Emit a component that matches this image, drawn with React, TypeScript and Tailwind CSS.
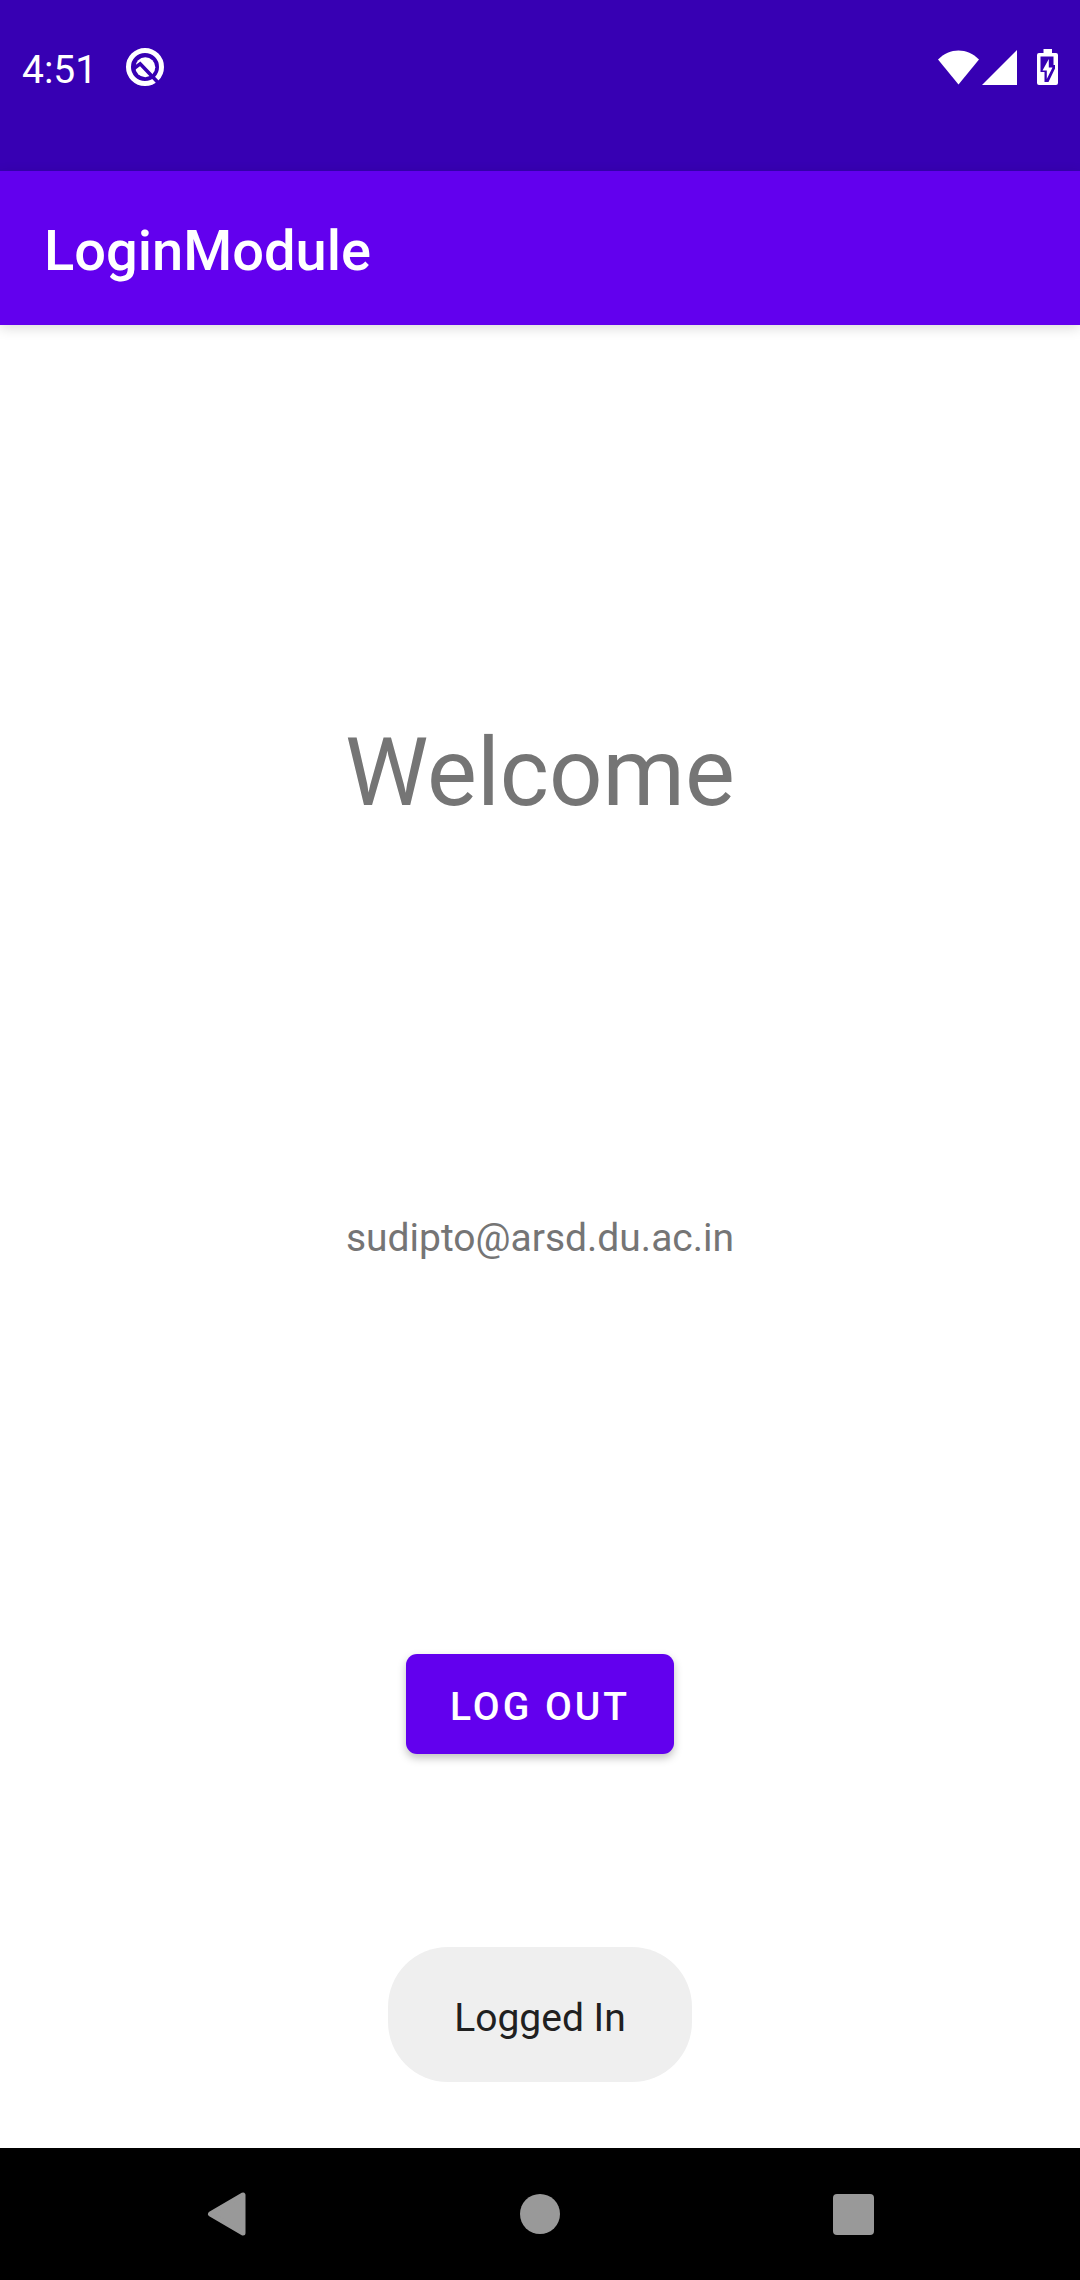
function AssistantIcon() {
  return (
    <svg className="h-10 w-10" viewBox="0 0 40 40" fill="none" aria-hidden="true">
      <circle cx="20" cy="20" r="16.5" stroke="white" strokeWidth="5" />
      <circle cx="20.3" cy="20.3" r="10" fill="white" />
      <path d="M7.5 22.5 15.2 16.8 33 35.5" stroke="#3700b3" strokeWidth="3.6" />
    </svg>
  );
}

function WifiIcon() {
  return (
    <svg className="h-[35px] w-[41px]" viewBox="0 0 41 35" fill="white" aria-hidden="true">
      <path d="M20.5 34.5 0 9.5C6 3.5 13 .5 20.5 .5S35 3.5 41 9.5Z" />
    </svg>
  );
}

function SignalIcon() {
  return (
    <svg className="h-[35px] w-[35px]" viewBox="0 0 35 35" fill="white" aria-hidden="true">
      <path d="M35 0V35H0Z" />
    </svg>
  );
}

function BatteryIcon() {
  return (
    <svg className="h-9 w-[21px]" viewBox="0 0 21 36" aria-hidden="true">
      <path
        d="M6.5 0h8.5v4h4a2 2 0 0 1 2 2v28a2 2 0 0 1-2 2H2a2 2 0 0 1-2-2V6a2 2 0 0 1 2-2h4.5Z"
        fill="white"
      />
      <path d="M3.5 7.5h13v8.5h1.5v3.5L11.5 33H7.5V23H3.5Z" fill="#3700b3" />
      <path d="M11.8 10v8.5h3.7L9.8 30v-8.500H5.5Z" fill="white" />
    </svg>
  );
}

function StatusBar() {
  return (
    <div className="flex h-[171px] items-start justify-between bg-[#3700b3] px-[22px] pt-[47px] text-white">
      <div className="flex h-10 items-center gap-7">
        <span className="pt-1.5 text-[39px] leading-[46px]">4:51</span>
        <AssistantIcon />
      </div>
      <div className="flex h-10 items-center">
        <WifiIcon />
        <div className="ml-[3px]">
          <SignalIcon />
        </div>
        <div className="ml-5">
          <BatteryIcon />
        </div>
      </div>
    </div>
  );
}

function NavigationBar() {
  return (
    <nav className="flex h-[132px] items-center justify-center bg-black">
      <div className="grid w-[87%] grid-cols-3 justify-items-center">
        <button aria-label="Back" className="flex h-24 w-24 items-center justify-center">
          <svg className="h-11 w-10" viewBox="0 0 40 44" aria-hidden="true">
            <path
              d="M3.5 22 36 3v38Z"
              fill="#999999"
              stroke="#999999"
              strokeWidth="5"
              strokeLinejoin="round"
            />
          </svg>
        </button>
        <button aria-label="Home" className="flex h-24 w-24 items-center justify-center">
          <span className="h-10 w-10 rounded-full bg-[#999999]" />
        </button>
        <button aria-label="Recent apps" className="flex h-24 w-24 items-center justify-center">
          <span className="h-[41px] w-[41px] rounded bg-[#999999]" />
        </button>
      </div>
    </nav>
  );
}

export default function App() {
  return (
    <div className="flex min-h-screen flex-col bg-white font-[Roboto,sans-serif]">
      <StatusBar />
      <header className="z-10 flex h-[154px] items-center bg-[#6200ee] px-11 pt-1.5 shadow-[0_3px_12px_rgba(0,0,0,0.15)]">
        <h1 className="text-[56px] leading-16 font-medium text-white">LoginModule</h1>
      </header>
      <main className="relative flex flex-1 flex-col items-center justify-evenly">
        <h2 className="pt-3 text-[94px] leading-[116px] text-[#757575]">Welcome</h2>
        <p className="pt-1.5 text-[39px] leading-[46px] text-[#757575]">sudipto@arsd.du.ac.in</p>
        <button className="my-4 h-[100px] rounded-[11px] bg-[#6200ee] px-11 pt-1.5 text-[39px] font-medium tracking-[3px] text-white shadow-[0_4px_8px_rgba(0,0,0,0.25)]">
          LOG OUT
        </button>
        <div
          role="status"
          className="absolute bottom-[66px] rounded-[60px] bg-[#efefef] px-[66px] pt-12 pb-[41px] text-[39px] leading-[46px] text-[#202020]"
        >
          Logged In
        </div>
      </main>
      <NavigationBar />
    </div>
  );
}
